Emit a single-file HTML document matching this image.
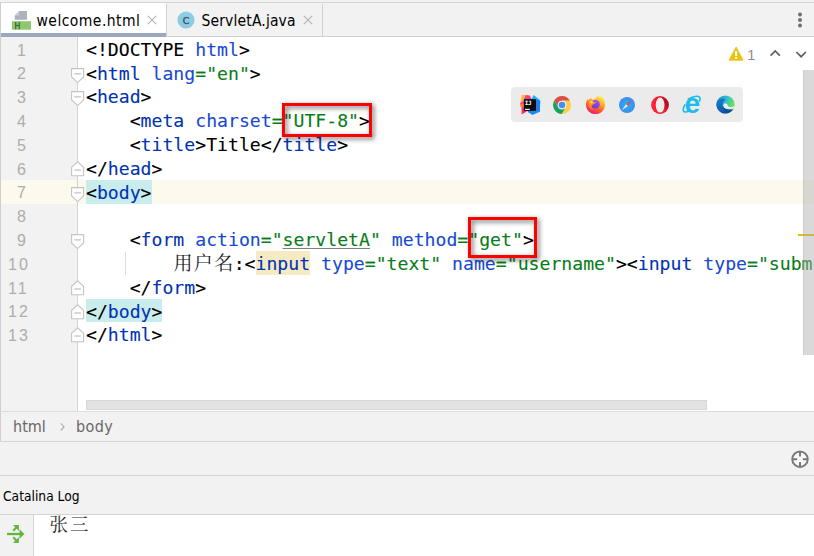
<!DOCTYPE html>
<html lang="zh">
<head>
<meta charset="UTF-8">
<title>welcome.html</title>
<style>
html,body{margin:0;padding:0;}
body{width:814px;height:556px;position:relative;overflow:hidden;background:#f2f2f2;font-family:"DejaVu Sans Condensed","DejaVu Sans","Liberation Sans","Noto Sans CJK SC",sans-serif;}
.abs{position:absolute;}
#topline{left:0;top:2px;width:814px;height:1px;background:#d4d4d4;}
#tabbar{left:0;top:3px;width:814px;height:33px;background:#f2f2f2;border-bottom:1px solid #d1d1d1;}
#tab1{left:1px;top:3px;width:165px;height:30px;background:#fff;border-bottom:4px solid #9ca8c0;}
#tabdiv1{left:166px;top:4px;width:1px;height:32px;background:#d1d1d1;}
#tabdiv2{left:322px;top:4px;width:1px;height:32px;background:#d1d1d1;}
.tablabel{font-size:15.5px;letter-spacing:0.45px;color:#000;white-space:nowrap;line-height:20px;height:20px;}
#editor{left:0;top:37px;width:814px;height:374px;background:#fff;}
#gutter{left:0;top:37px;width:77px;height:374px;background:#f2f2f2;border-right:1px solid #d4d4d4;}
#leftedge{left:0;top:3px;width:1px;height:438px;background:#cfcfcf;}
#curline{left:1px;top:180.2px;width:813px;height:23.7px;background:#fcfaed;}
.ln{position:absolute;left:17px;width:40px;font-family:"Liberation Sans","DejaVu Sans",sans-serif;font-size:16px;letter-spacing:2px;color:#adadad;line-height:23.8px;height:23.8px;white-space:pre;}
.cl{position:absolute;left:86px;white-space:pre;font-family:"DejaVu Sans Mono","Liberation Mono",monospace;font-size:18.15px;line-height:23.8px;height:23.8px;color:#000;-webkit-text-stroke:0.1px;}
.t{color:#0033b3;}
.a{color:#174ad4;}
.s{color:#067d17;}
.u{text-decoration:underline;text-decoration-thickness:1px;text-underline-offset:2px;text-decoration-color:#808080;}
.hl{}
.inp{}
.cj{font-family:"Noto Serif CJK SC","Noto Sans CJK SC",serif;font-size:19px;display:inline-block;width:60.3px;letter-spacing:1.4px;color:#222;position:relative;top:0px;-webkit-text-stroke:0;line-height:20px;}
#vscroll{left:803px;top:69.5px;width:11px;height:285.5px;background:rgba(170,170,170,0.45);border-left:1px solid rgba(150,150,150,0.18);box-sizing:border-box;}
#ymark{left:798px;top:233.6px;width:16px;height:2.6px;background:#e8c000;}
#hscroll{left:86px;top:399.5px;width:621px;height:10px;background:#e3e3e3;border:1px solid #d6d6d6;box-sizing:border-box;}
#edbottom{left:0;top:411px;width:814px;height:1px;background:#dcdcdc;}
#crumbs{left:0;top:412px;width:814px;height:29px;background:#f2f2f2;border-bottom:1px solid #d4d4d4;}
.crumb{font-size:16px;color:#686868;line-height:20px;height:20px;white-space:nowrap;}
#bar2{left:0;top:442px;width:814px;height:33px;background:#f2f2f2;border-bottom:1px solid #d4d4d4;}
#bar3{left:0;top:476px;width:814px;height:38px;background:#f2f2f2;border-bottom:1px solid #d4d4d4;}
#console{left:0;top:515px;width:814px;height:41px;background:#fff;}
#cgutter{left:0;top:515px;width:33px;height:41px;background:#f2f2f2;border-right:1px solid #d4d4d4;}
#zs{left:49.4px;top:509.9px;font-family:"Noto Serif CJK SC","Noto Sans CJK SC",serif;font-size:18.5px;line-height:26px;color:#2b2b2b;letter-spacing:2px;white-space:nowrap;}
#browsers{left:511px;top:87.3px;width:232px;height:34.5px;background:#ebebeb;border-radius:4px;}
.rbox{position:absolute;border:3px solid #ff0000;box-sizing:border-box;filter:drop-shadow(2.5px 2.5px 2.5px rgba(0,0,0,0.6));}
svg{position:absolute;overflow:visible;}
</style>
</head>
<body>
<div class="abs" id="topline"></div>
<div class="abs" id="tabbar"></div>
<div class="abs" id="tab1"></div>
<div class="abs" id="tabdiv1"></div><div class="abs" id="tabdiv2"></div>
<svg style="left:11px;top:10px" width="22" height="22" viewBox="0 0 22 22">
<path d="M8.5 1 H16 V9.7 H3.7 V5.8 Z" fill="#aab2bc"/>
<path d="M8.2 0.8 V5.5 H3.5 Z" fill="#c9ced5"/>
<rect x="1" y="11.2" width="19" height="8.5" fill="#8dc871"/>
<text x="3.4" y="18.9" font-family="'DejaVu Sans Condensed','DejaVu Sans','Liberation Sans',sans-serif" font-size="8.6" fill="#2f5a1c" stroke="#2f5a1c" stroke-width="0.25">H</text>
</svg>
<div class="abs tablabel" style="left:36.5px;top:10.7px;">welcome.html</div>
<svg style="left:147px;top:15px" width="10" height="10" viewBox="0 0 10 10"><path d="M0.8 0.8 L9.2 9.2 M9.2 0.8 L0.8 9.2" stroke="#b3b3b3" stroke-width="1.1" fill="none"/></svg>
<svg style="left:176px;top:10px" width="20" height="20" viewBox="0 0 20 20">
<circle cx="10" cy="10" r="8.6" fill="#8ccde3"/>
<text x="10" y="13.5" text-anchor="middle" font-family="'DejaVu Sans','Liberation Sans',sans-serif" font-size="9.4" fill="#3d5463" stroke="#3d5463" stroke-width="0.45">C</text>
</svg>
<div class="abs tablabel" style="left:201.5px;top:10.7px;letter-spacing:0.15px;">ServletA.java</div>
<svg style="left:303px;top:15px" width="10" height="10" viewBox="0 0 10 10"><path d="M0.8 0.8 L9.2 9.2 M9.2 0.8 L0.8 9.2" stroke="#b3b3b3" stroke-width="1.1" fill="none"/></svg>
<svg style="left:796px;top:10px" width="8" height="20" viewBox="0 0 8 20"><circle cx="4" cy="4.5" r="2" fill="#6e6e6e"/><circle cx="4" cy="10" r="2" fill="#6e6e6e"/><circle cx="4" cy="15.6" r="2" fill="#6e6e6e"/></svg>
<div class="abs" id="editor"></div>
<div class="abs" id="gutter"></div>
<div class="abs" id="curline"></div>
<div class="abs" style="left:77px;top:37px;width:1px;height:374px;background:#d4d4d4;"></div>
<div class="abs" id="leftedge"></div>
<div class="abs" style="left:125px;top:251.5px;width:1px;height:23px;background:#dcdcdc;"></div>
<div class="abs" style="left:86px;top:180.20px;width:65.56px;height:23.7px;background:#c9ecec;"></div>
<div class="abs" style="left:86px;top:299.20px;width:76.49px;height:23.3px;background:#c9ecec;"></div>
<div class="abs" style="left:255.57px;top:251.40px;width:54.64px;height:23.8px;background:#f6eac3;"></div>
<div class="ln" style="top:38.60px;left:17px">1</div>
<div class="cl" style="top:37.70px">&lt;!DOCTYPE <span class="a">html</span>&gt;</div>
<div class="ln" style="top:62.40px;left:17px">2</div>
<div class="cl" style="top:61.50px">&lt;<span class="t">html</span> <span class="a">lang</span><span class="s">="en"</span>&gt;</div>
<div class="ln" style="top:86.20px;left:17px">3</div>
<div class="cl" style="top:85.30px">&lt;<span class="t">head</span>&gt;</div>
<div class="ln" style="top:110.00px;left:17px">4</div>
<div class="cl" style="top:109.10px">    &lt;<span class="t">meta</span> <span class="a">charset</span><span class="s">="UTF-8"</span>&gt;</div>
<div class="ln" style="top:133.80px;left:17px">5</div>
<div class="cl" style="top:132.90px">    &lt;<span class="t">title</span>&gt;Title&lt;/<span class="t">title</span>&gt;</div>
<div class="ln" style="top:157.60px;left:17px">6</div>
<div class="cl" style="top:156.70px">&lt;/<span class="t">head</span>&gt;</div>
<div class="ln" style="top:181.40px;left:17px">7</div>
<div class="cl" style="top:180.50px"><span class="hl">&lt;<span class="t">body</span>&gt;</span></div>
<div class="ln" style="top:205.20px;left:17px">8</div>
<div class="ln" style="top:229.00px;left:17px">9</div>
<div class="cl" style="top:228.10px">    &lt;<span class="t">form</span> <span class="a">action</span><span class="s">="<span class="u">servletA</span>"</span> <span class="a">method</span><span class="s">="get"</span>&gt;</div>
<div class="ln" style="top:252.80px;left:8px">10</div>
<div class="cl" style="top:251.90px">        <span class="cj">用户名</span>:&lt;<span class="t inp">input</span> <span class="a">type</span><span class="s">="text"</span> <span class="a">name</span><span class="s">="username"</span>&gt;&lt;<span class="t">input</span> <span class="a">type</span><span class="s">="submit"</span>&gt;</div>
<div class="ln" style="top:276.60px;left:8px">11</div>
<div class="cl" style="top:275.70px">    &lt;/<span class="t">form</span>&gt;</div>
<div class="ln" style="top:300.40px;left:8px">12</div>
<div class="cl" style="top:299.50px"><span class="hl">&lt;/<span class="t">body</span>&gt;</span></div>
<div class="ln" style="top:324.20px;left:8px">13</div>
<div class="cl" style="top:323.30px">&lt;/<span class="t">html</span>&gt;</div>
<svg style="left:70.5px;top:67.50px" width="14" height="16" viewBox="0 0 14 16"><path d="M0.6 0.6 H12.6 V9 L6.6 14.6 L0.6 9 Z" fill="#fff" stroke="#c4c4c4" stroke-width="1.1"/><path d="M3.3 5.9 H9.9" stroke="#b8b8b8" stroke-width="1.1"/></svg>
<svg style="left:70.5px;top:91.30px" width="14" height="16" viewBox="0 0 14 16"><path d="M0.6 0.6 H12.6 V9 L6.6 14.6 L0.6 9 Z" fill="#fff" stroke="#c4c4c4" stroke-width="1.1"/><path d="M3.3 5.9 H9.9" stroke="#b8b8b8" stroke-width="1.1"/></svg>
<svg style="left:70.5px;top:186.50px" width="14" height="16" viewBox="0 0 14 16"><path d="M0.6 0.6 H12.6 V9 L6.6 14.6 L0.6 9 Z" fill="#fff" stroke="#c4c4c4" stroke-width="1.1"/><path d="M3.3 5.9 H9.9" stroke="#b8b8b8" stroke-width="1.1"/></svg>
<svg style="left:70.5px;top:234.10px" width="14" height="16" viewBox="0 0 14 16"><path d="M0.6 0.6 H12.6 V9 L6.6 14.6 L0.6 9 Z" fill="#fff" stroke="#c4c4c4" stroke-width="1.1"/><path d="M3.3 5.9 H9.9" stroke="#b8b8b8" stroke-width="1.1"/></svg>
<svg style="left:70.5px;top:160.70px" width="14" height="16" viewBox="0 0 14 16"><path d="M0.6 14.7 H12.6 V6.3 L6.6 0.8 L0.6 6.3 Z" fill="#fff" stroke="#c4c4c4" stroke-width="1.1"/><path d="M3.3 9 H9.9" stroke="#b8b8b8" stroke-width="1.1"/></svg>
<svg style="left:70.5px;top:279.70px" width="14" height="16" viewBox="0 0 14 16"><path d="M0.6 14.7 H12.6 V6.3 L6.6 0.8 L0.6 6.3 Z" fill="#fff" stroke="#c4c4c4" stroke-width="1.1"/><path d="M3.3 9 H9.9" stroke="#b8b8b8" stroke-width="1.1"/></svg>
<svg style="left:70.5px;top:303.50px" width="14" height="16" viewBox="0 0 14 16"><path d="M0.6 14.7 H12.6 V6.3 L6.6 0.8 L0.6 6.3 Z" fill="#fff" stroke="#c4c4c4" stroke-width="1.1"/><path d="M3.3 9 H9.9" stroke="#b8b8b8" stroke-width="1.1"/></svg>
<svg style="left:70.5px;top:327.30px" width="14" height="16" viewBox="0 0 14 16"><path d="M0.6 14.7 H12.6 V6.3 L6.6 0.8 L0.6 6.3 Z" fill="#fff" stroke="#c4c4c4" stroke-width="1.1"/><path d="M3.3 9 H9.9" stroke="#b8b8b8" stroke-width="1.1"/></svg>
<div class="rbox" style="left:282px;top:103px;width:90px;height:34px;"></div>
<div class="rbox" style="left:468px;top:217px;width:69px;height:40.6px;"></div>
<svg style="left:728px;top:46px" width="80" height="16" viewBox="0 0 80 16">
<path d="M8.1 1 L15.2 14.2 H1 Z" fill="#ecc210" stroke="#ecc210" stroke-width="0.8" stroke-linejoin="round"/>
<rect x="7.1" y="5" width="2" height="5" fill="#fff"/><rect x="7.1" y="11" width="2" height="1.9" fill="#fff"/>
<text x="19.2" y="13.8" font-family="'Liberation Sans','DejaVu Sans',sans-serif" font-size="14.5" fill="#8c8c8c">1</text>
<path d="M42.6 9.6 L47.2 5 L51.8 9.6" fill="none" stroke="#5e5e5e" stroke-width="1.7"/>
<path d="M68.4 6 L73.1 10.7 L77.8 6" fill="none" stroke="#5e5e5e" stroke-width="1.7"/>
</svg>
<div class="abs" id="browsers"></div>
<svg style="left:515px;top:90px" width="30" height="30" viewBox="0 0 30 30">
<path d="M7 5 L11.2 5 L9 11 L5.2 12.9 Z" fill="#fdb52a"/>
<path d="M10.8 5.1 L14.8 5.6 L16.6 9.2 L9 9.4 Z" fill="#fc3a8c"/>
<path d="M5.1 12.9 L9 10.6 L9 14.2 L5.4 14.3 Z" fill="#f636a8"/>
<path d="M5 16 L5.5 14.1 L9 14 L9 17.6 L6.5 17.1 Z" fill="#ff7a1a"/>
<path d="M6.5 17 L9 17.3 L13.2 20.6 L6.7 24.6 Z" fill="#fb2c63"/>
<path d="M16.4 9.2 L18.6 4.9 L25.2 10.2 L25.2 14 L21 13 Z" fill="#18b4f8"/>
<path d="M21 9 L25.2 11 L24.9 21.9 L21 21 Z" fill="#1e7ef5"/>
<path d="M12.8 20.6 L21 20.6 L24.9 21.8 L17.4 25.1 L12.8 22 Z" fill="#1a8bf5"/>
<rect x="8.9" y="9.1" width="12.1" height="11.8" fill="#0a0a0a"/>
<text x="9.7" y="14.9" font-family="'DejaVu Sans Mono','Liberation Mono',monospace" font-weight="bold" font-size="6" letter-spacing="-0.35" fill="#fff">IJ</text>
<rect x="10" y="18.8" width="4.8" height="1.1" fill="#fff"/>
</svg>
<svg style="left:552px;top:95px" width="20" height="20" viewBox="-10 -10 20 20">
<circle r="8.8" fill="#fff"/>
<path id="cblade" d="M0 -4.3 L7.9 -4.3 A9 9 0 0 0 -7.67 -4.69 L-3.72 2.15 A4.3 4.3 0 0 1 0 -4.3 Z" fill="#dd4f41"/>
<path d="M0 -4.3 L7.9 -4.3 A9 9 0 0 0 -7.67 -4.69 L-3.72 2.15 A4.3 4.3 0 0 1 0 -4.3 Z" fill="#ffce44" transform="rotate(120)"/>
<path d="M0 -4.3 L7.9 -4.3 A9 9 0 0 0 -7.67 -4.69 L-3.72 2.15 A4.3 4.3 0 0 1 0 -4.3 Z" fill="#1ba261" transform="rotate(240)"/>
<circle r="4.2" fill="#f4f4f4"/>
<circle r="3.3" fill="#4b8bf4"/>
</svg>
<svg style="left:585px;top:94px" width="21" height="21" viewBox="-10.5 -10.5 21 21">
<defs>
<linearGradient id="ffg" x1="0.75" y1="0.05" x2="0.3" y2="1"><stop offset="0" stop-color="#fff04a"/><stop offset="0.35" stop-color="#ffae22"/><stop offset="0.65" stop-color="#ff5a2c"/><stop offset="1" stop-color="#e8197a"/></linearGradient>
<linearGradient id="ffp" x1="0.7" y1="0" x2="0.3" y2="1"><stop offset="0" stop-color="#a24dff"/><stop offset="1" stop-color="#5b42d8"/></linearGradient>
<linearGradient id="ffh" x1="0.2" y1="0" x2="0.6" y2="1"><stop offset="0" stop-color="#ffb02e"/><stop offset="1" stop-color="#ff5a2c"/></linearGradient>
</defs>
<path d="M2.2 -9.8 C3.4 -8.6 4.2 -7.6 4.6 -6.6 C5 -7.2 5.2 -7.8 5.2 -8.4 C8 -6.4 9.6 -3.2 9.5 0.4 C9.3 5.6 5.2 9.6 0 9.6 C-5.3 9.6 -9.5 5.4 -9.5 0.2 C-9.5 -2.2 -8.8 -4.2 -7.6 -5.8 C-7.6 -5.2 -7.5 -4.6 -7.3 -4.2 C-6.6 -5.2 -5.6 -5.9 -4.6 -6.2 C-4 -5.4 -3.2 -5 -2.4 -4.8 C-0.6 -5.4 1.6 -7 2.2 -9.8 Z" fill="url(#ffg)"/>
<circle cx="0" cy="-0.3" r="4.3" fill="url(#ffp)"/>
<path d="M-6.2 -3.4 C-4.6 -4 -3 -3.6 -2 -2.4 C-0.8 -2.6 0.4 -2.4 1 -1.8 C0 -1.6 -0.8 -1.2 -1.2 -0.4 C-2.2 -0.2 -3.2 0.4 -3.6 1.4 C-4.2 3 -3 5 -0.6 5.4 C-4 6.2 -7 3.6 -7 0.2 Z" fill="url(#ffh)"/>
<path d="M-5.8 -3.3 C-4.2 -3.7 -2.8 -3 -2 -2.3 C-3 -2 -4 -1.4 -4.4 -0.6 C-4.6 -1.8 -5 -2.6 -5.8 -3.3 Z" fill="#ffd84a"/>
</svg>
<svg style="left:618px;top:96px" width="18" height="18" viewBox="-9 -9 18 18">
<defs><radialGradient id="sfg" cx="0.5" cy="0.5" r="0.5"><stop offset="0" stop-color="#27b7ea"/><stop offset="0.6" stop-color="#2f9ff0"/><stop offset="1" stop-color="#3d80f4"/></radialGradient></defs>
<circle r="8.5" fill="#f4f6f8"/>
<circle r="8" fill="url(#sfg)"/>
<circle r="7" fill="none" stroke="#7fbdf8" stroke-width="0.8" stroke-dasharray="0.4 0.9" opacity="0.7"/>
<path d="M5.2 -5.2 L0.8 0.9 L-0.9 -0.8 Z" fill="#f5413c"/>
<path d="M-5.2 5.2 L0.8 0.9 L-0.9 -0.8 Z" fill="#f2f2f2"/>
</svg>
<svg style="left:650px;top:95px" width="20" height="20" viewBox="-10 -10 20 20">
<defs><linearGradient id="opg" x1="0" y1="0.3" x2="1" y2="0.1"><stop offset="0" stop-color="#ff2536"/><stop offset="0.5" stop-color="#f01a2c"/><stop offset="0.75" stop-color="#c20d20"/><stop offset="1" stop-color="#a80818"/></linearGradient>
<linearGradient id="opg2" x1="0" y1="0" x2="0" y2="1"><stop offset="0" stop-color="#ff2536" stop-opacity="0"/><stop offset="1" stop-color="#ff3040" stop-opacity="0.75"/></linearGradient></defs>
<circle r="8.9" fill="url(#opg)"/>
<path d="M2 8.6 A8.9 8.9 0 0 0 8.9 0 L4.4 0 Z" fill="url(#opg2)"/>
<ellipse cx="0.1" cy="0.1" rx="4.4" ry="7.5" fill="#ececec"/>
</svg>
<svg style="left:680.3px;top:92.3px" width="24" height="24" viewBox="-12 -12 24 24">
<text x="0.3" y="8.7" text-anchor="middle" font-family="'Liberation Sans','DejaVu Sans',sans-serif" font-weight="bold" font-size="28" fill="#1ebbee">e</text>
<path d="M-6.9 0.4 C-8.6 3.4 -9.2 6.2 -8.2 7.4 C-7.2 8.4 -5 8 -2.6 6.8" fill="none" stroke="#1ebbee" stroke-width="1.6"/>
<path d="M-4.2 -4.6 C0.8 -7.8 6 -8.6 7.6 -6.8 C8.4 -5.8 8.2 -4.2 7.2 -2.4" fill="none" stroke="#1ebbee" stroke-width="1.6"/>
</svg>
<svg style="left:714.7px;top:94.3px" width="21" height="21" viewBox="-10.5 -10.5 21 21">
<defs>
<linearGradient id="edg1" x1="0" y1="0.2" x2="1" y2="0.5"><stop offset="0" stop-color="#1a86d4"/><stop offset="0.5" stop-color="#2cbfd0"/><stop offset="0.85" stop-color="#5fdc6c"/><stop offset="1" stop-color="#6fe060"/></linearGradient>
<linearGradient id="edg2" x1="0" y1="0" x2="0.8" y2="1"><stop offset="0" stop-color="#1a7fd0"/><stop offset="0.6" stop-color="#1260b4"/><stop offset="1" stop-color="#0b3f86"/></linearGradient>
</defs>
<circle r="9.1" fill="url(#edg1)"/>
<path d="M-9.1 0 C-9.1 5 -5 9.1 0 9.1 C3.4 9.1 6.4 7.2 7.9 4.5 C4.6 6.6 -0.6 6 -2.4 2.6 C-3.8 -0.4 -2.6 -3.6 0.4 -4.8 C-3.6 -7 -8.8 -4.6 -9.1 0 Z" fill="url(#edg2)"/>
<path d="M-2.3 1.3 C-2.3 -0.5 -0.6 -1.5 0.8 -1 C2.2 -0.5 2 1.6 3.4 2.2 C5.2 3 7.6 2.6 8.9 1.6 C8.7 2.8 8.3 3.6 7.8 4.2 C5 5 1.8 5 -0.4 4 C-1.8 3.3 -2.3 2.4 -2.3 1.3 Z" fill="#ededed"/>
<path d="M-2.6 1.4 C-2.6 5.2 2 8 7.9 4.3 C5 5.2 1.8 5.1 -0.4 4 C-1.7 3.3 -2.3 2.4 -2.3 1.3 Z" fill="#0c4a94"/>
</svg>
<div class="abs" id="ymark"></div>
<div class="abs" id="vscroll"></div>
<div class="abs" id="hscroll"></div>
<div class="abs" id="edbottom"></div>
<div class="abs" id="crumbs"></div>
<div class="abs" style="left:0;top:412px;width:1px;height:29px;background:#cfcfcf;"></div>
<div class="abs crumb" style="left:13px;top:417.4px;">html</div>
<svg style="left:59px;top:422px" width="7" height="10" viewBox="0 0 7 10"><path d="M1.8 1.3 L5 4.9 L1.8 8.5" fill="none" stroke="#b0b0b0" stroke-width="1.2"/></svg>
<div class="abs crumb" style="left:76px;top:417.4px;letter-spacing:0.4px;">body</div>
<div class="abs" id="bar2"></div>
<svg style="left:790px;top:449px" width="20" height="20" viewBox="0 0 20 20">
<circle cx="10" cy="10.2" r="7.7" fill="#f8f8f8" stroke="#7a7a7a" stroke-width="2"/>
<path d="M10 2.4 V7.4 M10 13 V18 M2.2 10.2 H7.2 M12.8 10.2 H17.8" stroke="#7a7a7a" stroke-width="2"/>
</svg>
<div class="abs" id="bar3"></div>
<div class="abs" style="left:3px;top:487.0px;font-size:13.7px;line-height:18px;color:#000;white-space:nowrap;">Catalina Log</div>
<div class="abs" id="console"></div>
<div class="abs" id="cgutter"></div>
<svg style="left:6px;top:524px" width="20" height="20" viewBox="0 0 20 20">
<path d="M1 10 H14.4" stroke="#5fb73c" stroke-width="2.3" fill="none"/>
<path d="M13.5 5.3 L18.5 10 L13.5 14.7 Z" fill="#5fb73c"/>
<path d="M7 1 H12.9 V6.9 Z" fill="#5fb73c"/>
<path d="M7.2 6.7 L10.6 3.3" stroke="#5fb73c" stroke-width="2.1"/>
<path d="M7 19 H12.9 V13.1 Z" fill="#5fb73c"/>
<path d="M7.2 13.3 L10.6 16.7" stroke="#5fb73c" stroke-width="2.1"/>
</svg>
<div class="abs" id="zs">张三</div>
</body>
</html>
